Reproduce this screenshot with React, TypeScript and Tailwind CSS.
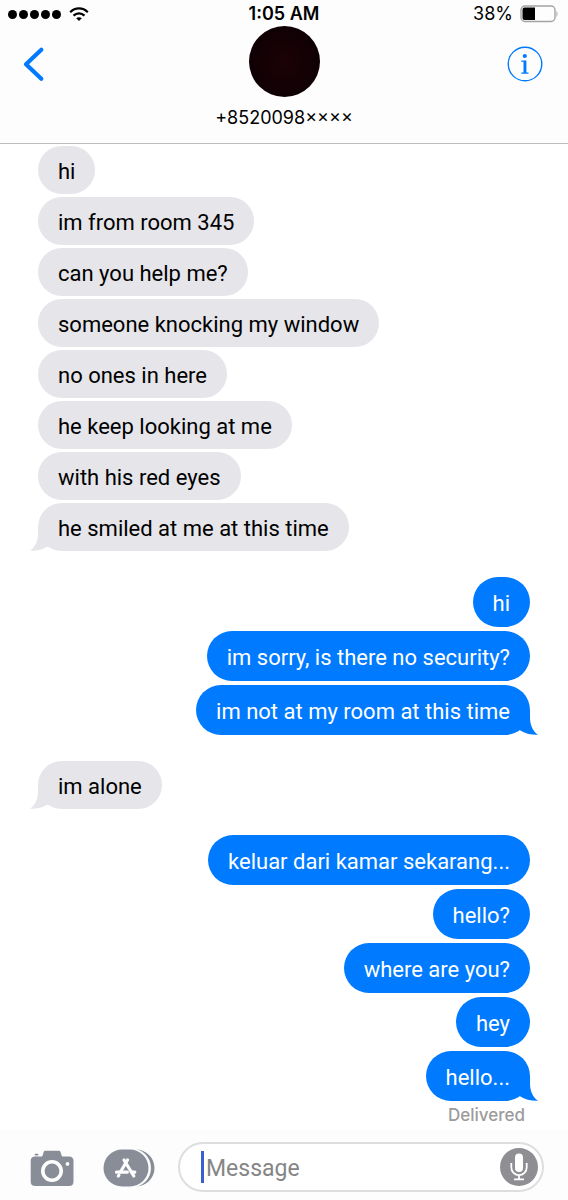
import clsx from 'clsx'

type Side = 'received' | 'sent'

interface Group {
  side: Side
  messages: string[]
}

const GROUPS: Group[] = [
  {
    side: 'received',
    messages: [
      'hi',
      'im from room 345',
      'can you help me?',
      'someone knocking my window',
      'no ones in here',
      'he keep looking at me',
      'with his red eyes',
      'he smiled at me at this time',
    ],
  },
  { side: 'sent', messages: ['hi', 'im sorry, is there no security?', 'im not at my room at this time'] },
  { side: 'received', messages: ['im alone'] },
  { side: 'sent', messages: ['keluar dari kamar sekarang...', 'hello?', 'where are you?', 'hey', 'hello...'] },
]

export default function App() {
  return (
    <div className="flex min-h-screen flex-col bg-white font-['Inter','Liberation_Sans',sans-serif] text-black">
      <header className="border-b border-[#bcbcc0] bg-[#fdfdfd]">
        <StatusBar />
        <div className="grid h-[115px] grid-cols-[1fr_auto_1fr] items-start">
          <button type="button" aria-label="Back" className="mt-[18px] ml-5 w-fit text-[#007aff]">
            <svg width="28" height="36" viewBox="0 0 28 36" fill="none" stroke="currentColor" strokeWidth="4.2" strokeLinecap="round" strokeLinejoin="round">
              <path d="M21.3 3.8 6 18.2l15.3 14.5" />
            </svg>
          </button>
          <div className="-mt-0.5 flex flex-col items-center gap-[9px]">
            <div className="size-[71px] rounded-full bg-radial from-[#1c0206] to-[#0a0003]" />
            <h1 className="text-[18px] leading-6">+8520098××××</h1>
          </div>
          <button type="button" aria-label="Details" className="mt-[18px] mr-[25px] justify-self-end text-[#007aff]">
            <svg width="36" height="36" viewBox="0 0 36 36" fill="none">
              <circle cx="18" cy="18" r="16.8" stroke="currentColor" strokeWidth="1.4" />
              <circle cx="17.8" cy="10" r="2.1" fill="currentColor" />
              <path d="M14.3 14.6h5.1v12h2.1v1.2h-7.2v-1.2h2.2V15.8h-2.2z" fill="currentColor" />
            </svg>
          </button>
        </div>
      </header>

      <main className="flex flex-1 flex-col gap-[26px] px-[38px] pt-0.5">
        {GROUPS.map((group, i) => (
          <ul key={i} className={clsx('flex flex-col', group.side === 'sent' ? 'items-end gap-1' : 'items-start gap-[3px]')}>
            {group.messages.map((text, j) => (
              <Bubble key={j} side={group.side} text={text} tail={j === group.messages.length - 1} />
            ))}
            {i === GROUPS.length - 1 ? (
              <li className="-mt-0.5 mr-[5px] text-[17px] leading-6 font-medium text-[#9b9b9b]">Delivered</li>
            ) : null}
          </ul>
        ))}
      </main>

      <footer className="flex items-center bg-[#fdfdfd] pt-3 pr-6 pb-2 pl-[30px] text-[#888d97]">
        <button type="button" aria-label="Camera">
          <svg width="44" height="40" viewBox="0 0 44 40" fill="currentColor">
            <path fillRule="evenodd" d="M5 9.5h6.2c.8 0 1.2-.5 1.5-1.3l1-3.2c.3-.9.8-1.3 1.7-1.3h13.4c.9 0 1.4.4 1.7 1.3l1 3.2c.3.8.7 1.3 1.5 1.3H39c3 0 4.5 1.5 4.5 4.5v20.5c0 3-1.5 4.5-4.5 4.5H5.2C2.2 39 .7 37.5.7 34.5V14c0-3 1.5-4.5 4.3-4.5ZM22 13a11 11 0 1 0 0 22 11 11 0 0 0 0-22Zm0 3.6a7.4 7.4 0 1 1 0 14.8 7.4 7.4 0 0 1 0-14.8ZM37.5 15a1.9 1.9 0 1 0 0 3.8 1.9 1.9 0 0 0 0-3.8Z" />
            <rect x="4.5" y="6.8" width="4" height="1.6" rx=".8" />
          </svg>
        </button>
        <button type="button" aria-label="Apps" className="ml-7">
          <svg width="54" height="40" viewBox="0 0 54 40" fill="none">
            <rect x="8" y="2.5" width="44.5" height="37" rx="18.5" fill="currentColor" />
            <rect x="3" y="1.5" width="46" height="39" rx="19.5" fill="#fdfdfd" />
            <rect x="1.5" y="2.5" width="45" height="37" rx="18.5" fill="currentColor" />
            <g stroke="#fdfdfd" strokeWidth="3.2" strokeLinecap="round">
              <path d="M25.5 13 18.6 24.7" />
              <path d="M22 13l9.8 16" />
              <path d="M14.5 25.2h10.8M29.8 25.2h3" />
              <path d="M16.9 28.3l-.6.7" />
            </g>
          </svg>
        </button>
        <label className="ml-[22px] flex h-[50px] min-w-0 flex-1 items-center rounded-full border-2 border-[#dedede] bg-white pr-1 pl-[21px]">
          <span className="h-8 w-[3px] shrink-0 bg-[#3a5fd0]" />
          <input
            type="text"
            aria-label="Message"
            placeholder="Message"
            className="ml-0.5 min-w-0 flex-1 bg-transparent pt-1 font-[Roboto,sans-serif] text-[23px] leading-8 text-black outline-none placeholder:text-[#858585]"
          />
          <button type="button" aria-label="Record audio" className="shrink-0">
            <svg width="38" height="38" viewBox="0 0 38 38" fill="none">
              <circle cx="19" cy="19" r="19" fill="#8e8e93" />
              <rect x="15" y="5.5" width="8" height="18.5" rx="4" fill="#fff" />
              <path d="M11.3 15v4.5a7.7 7.7 0 0 0 15.4 0V15M19 27.2v3.6M14 31.3h10" stroke="#fff" strokeWidth="1.8" />
            </svg>
          </button>
        </label>
      </footer>
    </div>
  )
}

function StatusBar() {
  return (
    <div className="grid h-7 grid-cols-[1fr_auto_1fr] items-center px-2 text-[18px] leading-6">
      <div className="flex items-center gap-2">
        <div className="flex gap-0.5">
          {[0, 1, 2, 3, 4].map((dot) => (
            <span key={dot} className="size-[9px] rounded-full bg-black" />
          ))}
        </div>
        <svg width="20" height="16" viewBox="0 0 20 16" fill="none" stroke="#000" strokeWidth="2.2">
          <path d="M1.2 6.2c5-5 12.6-5 17.6 0" />
          <path d="M4.5 9.6c3.2-3.1 7.8-3.1 11 0" />
          <path d="M10 15l-2.8-2.7c1.6-1.3 4-1.3 5.6 0z" fill="#000" stroke="none" />
        </svg>
      </div>
      <time className="font-semibold">1:05 AM</time>
      <div className="flex items-center justify-end gap-[7px]">
        <span>38%</span>
        <svg width="40" height="18" viewBox="0 0 40 18" fill="none">
          <rect x="1" y="1" width="34" height="15.5" rx="4" stroke="#a3a3a3" strokeWidth="1.4" />
          <path d="M4.5 2.5H15v12.5H4.5a2 2 0 0 1-2-2v-8.5a2 2 0 0 1 2-2z" fill="#000" />
          <path d="M36.5 6c1.3 1 1.3 5 0 6z" fill="#a3a3a3" />
        </svg>
      </div>
    </div>
  )
}

function Bubble({ side, text, tail }: { side: Side; text: string; tail: boolean }) {
  const sent = side === 'sent'
  return (
    <li
      className={clsx(
        'relative flex items-center rounded-[25px] px-5 pt-1 font-[Roboto,sans-serif] text-[22px] leading-7',
        sent ? 'h-[50px] bg-[#007aff] text-white' : 'h-12 bg-[#e5e5ea]',
      )}
    >
      {text}
      {tail ? (
        <svg
          width="28"
          height="25"
          viewBox="0 0 28 25"
          className={clsx('absolute bottom-0', sent ? '-right-2 text-[#007aff]' : '-left-2 -scale-x-100 text-[#e5e5ea]')}
          fill="currentColor"
        >
          <path d="M6 0h14v7c0 7.5 2.5 14 8 17.8-7 .2-13-1.3-18-4.5z" />
        </svg>
      ) : null}
    </li>
  )
}
